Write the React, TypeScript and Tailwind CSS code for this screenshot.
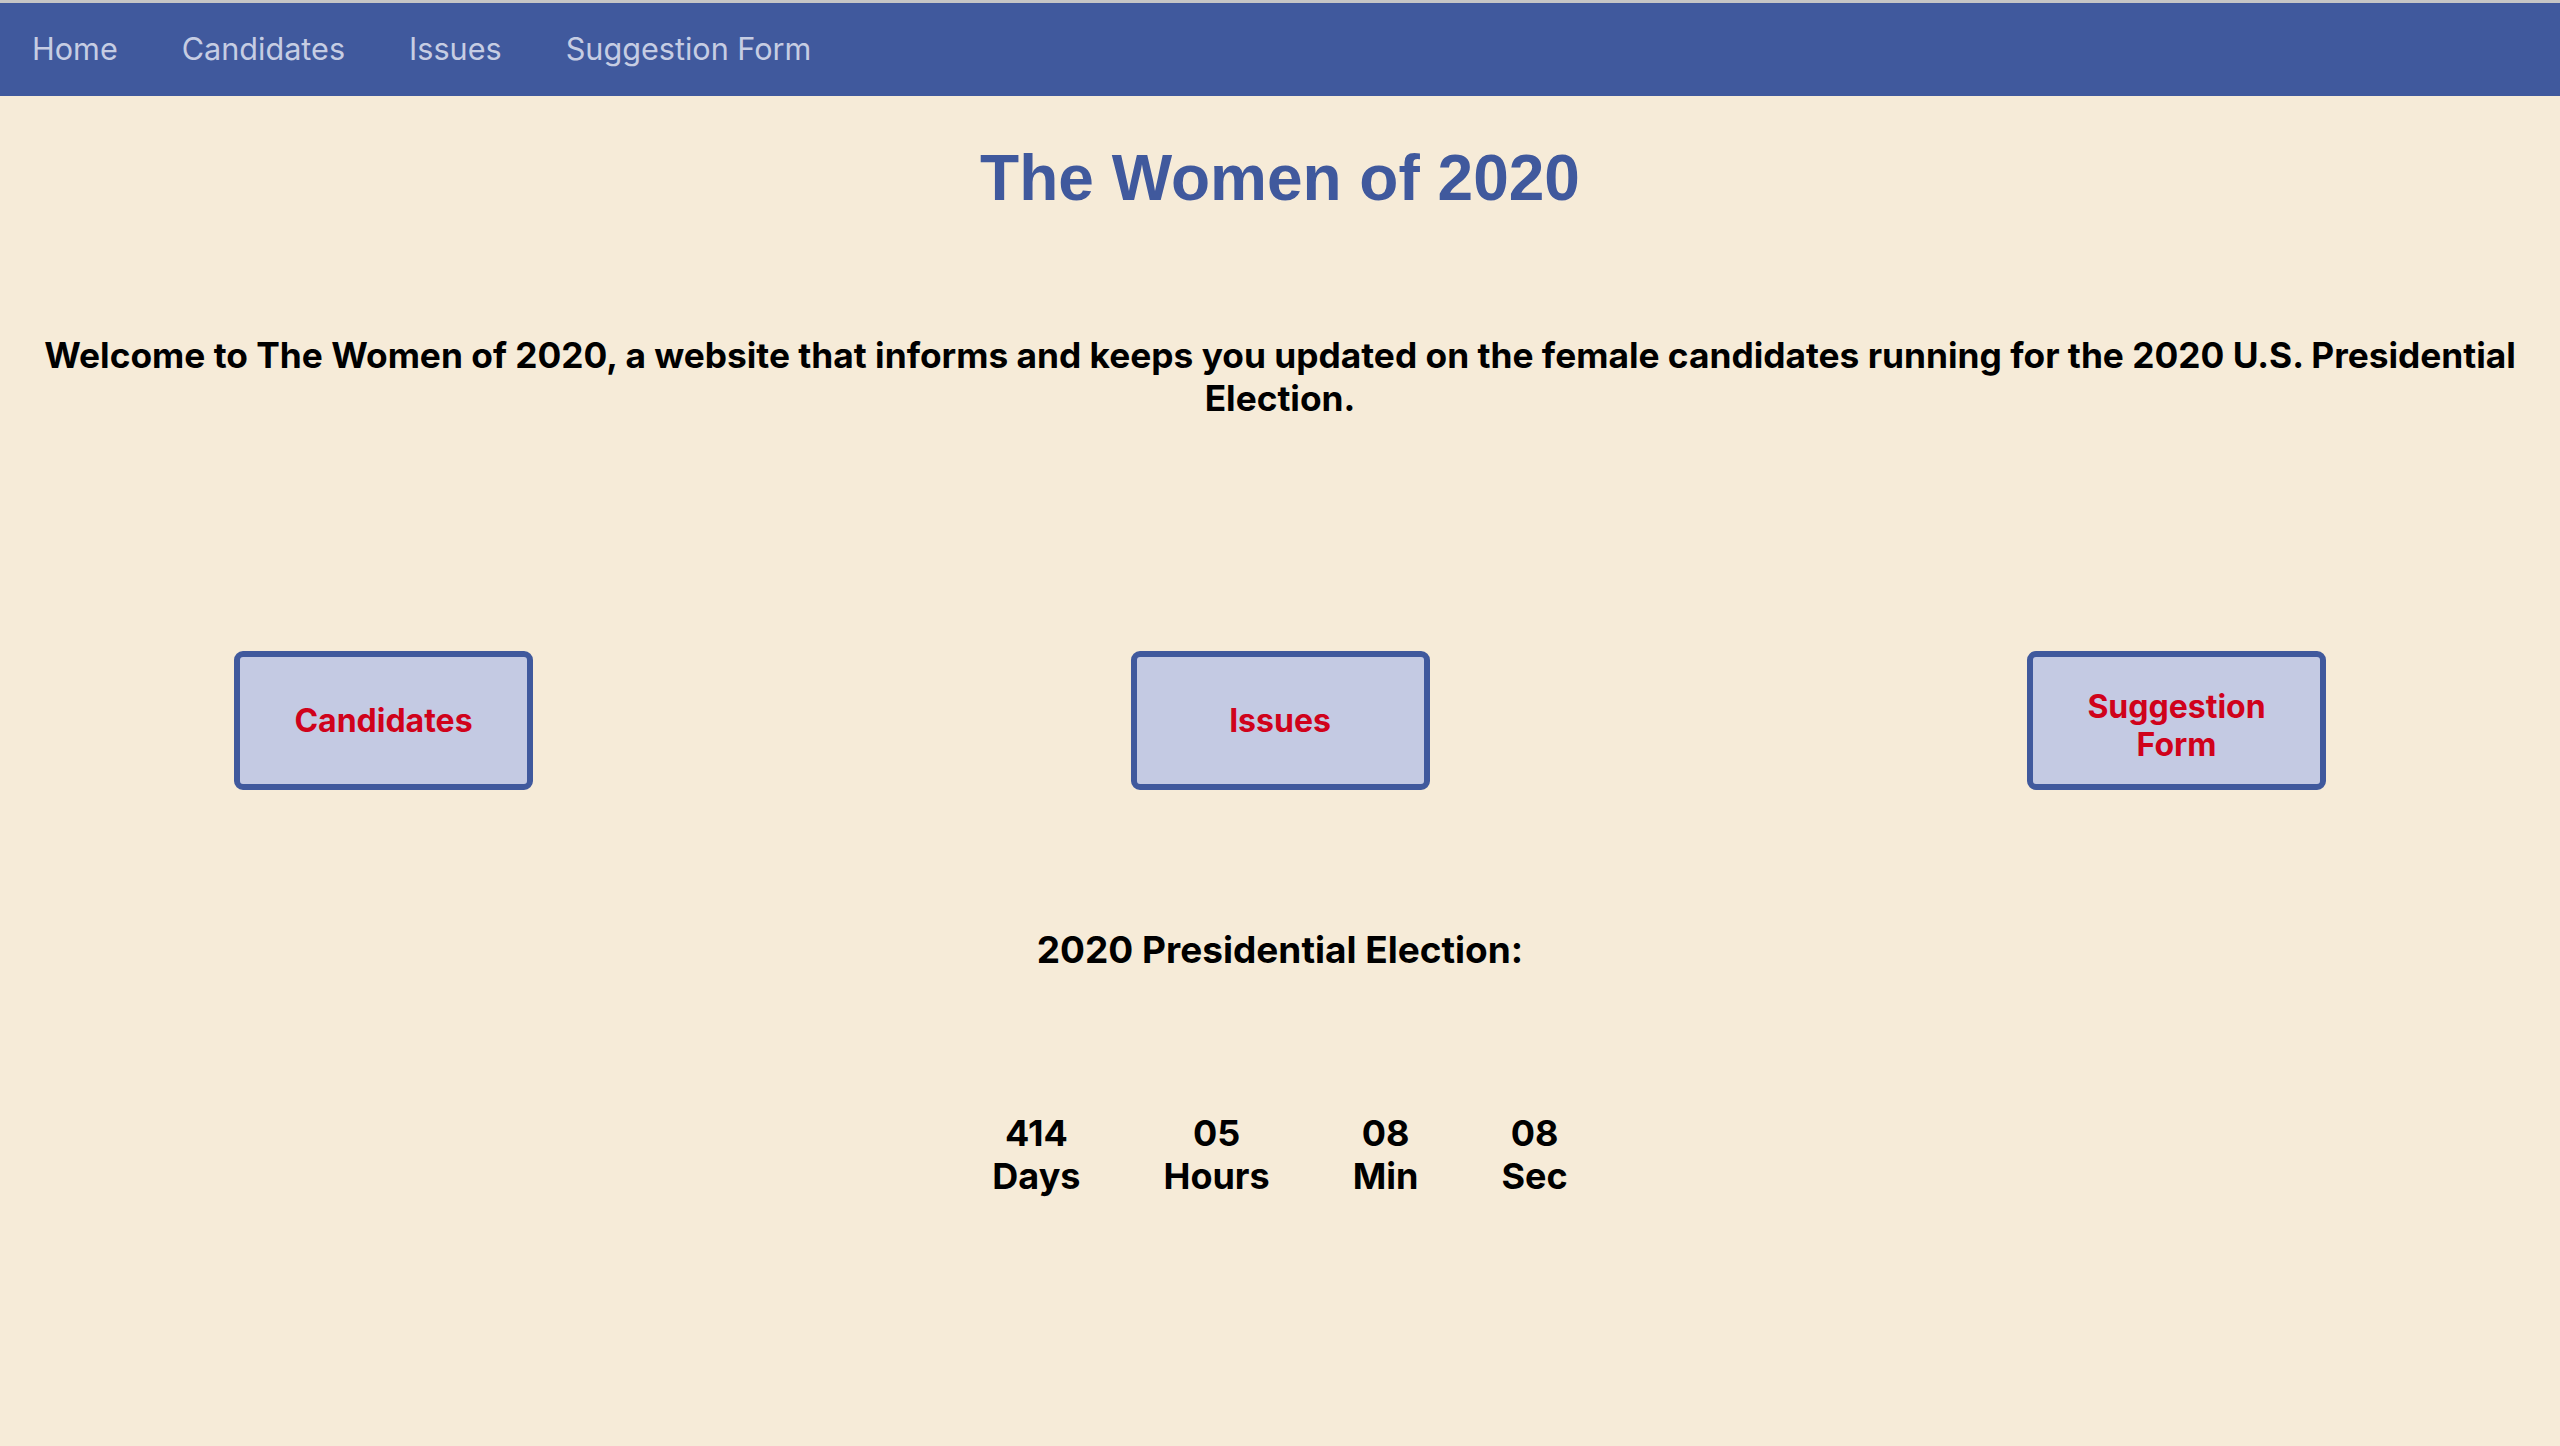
const navLinks = ["Home", "Candidates", "Issues", "Suggestion Form"];

const buttons = ["Candidates", "Issues", "Suggestion Form"];

const countdown = [
  { value: "414", label: "Days" },
  { value: "05", label: "Hours" },
  { value: "08", label: "Min" },
  { value: "08", label: "Sec" },
];

const App = () => {
  return (
    <div className="min-h-screen bg-[#f6ebd8] font-['Inter','Noto_Sans',sans-serif] text-black">
      <nav className="flex h-[96px] items-center border-t-[3px] border-[#c6c6c6] bg-[#40599d]">
        {navLinks.map((link, i) => (
          <a
            key={i}
            href="#"
            className="px-8 text-[30.6px] leading-none text-[#c6cde3]"
          >
            {link}
          </a>
        ))}
      </nav>

      <h1 className="mt-[50px] text-center font-['Liberation_Sans',Arial,sans-serif] text-[64px] font-bold leading-[64px] text-[#40599d]">
        The Women of 2020
      </h1>

      <p className="mt-[124px] px-[20px] text-center text-[35.3px] font-bold leading-[43px]">
        Welcome to The Women of 2020, a website that informs and keeps you
        updated on the female candidates running for the 2020 U.S. Presidential
        Election.
      </p>

      <div className="mt-[231px] flex justify-between px-[234px]">
        {buttons.map((label, i) => (
          <button
            key={i}
            className={
              label.includes(" ")
                ? "flex h-[139px] w-[299px] items-center justify-center rounded-[9px] border-[6px] border-[#40599d] bg-[#c4cae3] px-[34px] pt-[10px] text-center text-[32px] font-bold leading-[38px] text-[#d0021b]"
                : "flex h-[139px] w-[299px] items-center justify-center rounded-[9px] border-[6px] border-[#40599d] bg-[#c4cae3] px-[34px] text-center text-[32px] font-bold leading-[38px] text-[#d0021b]"
            }
          >
            {label}
          </button>
        ))}
      </div>

      <h3 className="mt-[138px] text-center text-[37px] font-bold leading-[43px]">
        2020 Presidential Election:
      </h3>

      <div className="mt-[141px] flex justify-center gap-[83px]">
        {countdown.map((item, i) => (
          <div key={i} className="text-center text-[36px] font-bold leading-[43px]">
            <div>{item.value}</div>
            <div>{item.label}</div>
          </div>
        ))}
      </div>
    </div>
  );
};

export default App;
